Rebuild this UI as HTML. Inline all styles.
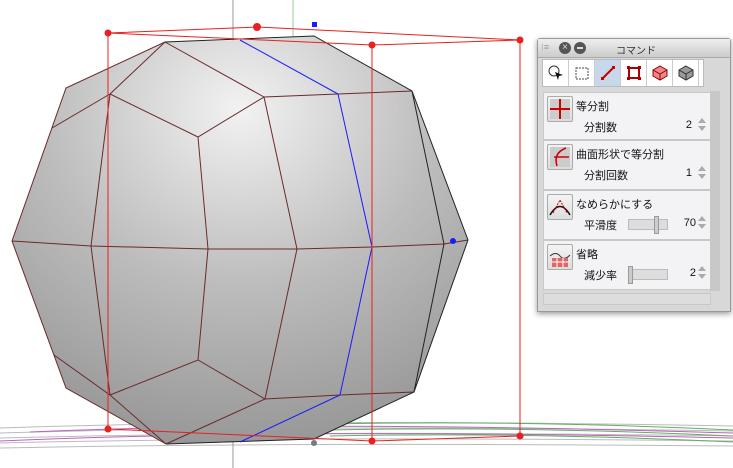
<!DOCTYPE html>
<html><head><meta charset="utf-8"><style>
body{margin:0;width:733px;height:468px;background:#fff;position:relative;overflow:hidden;font-family:"Liberation Sans","Noto Sans CJK JP",sans-serif;}
svg.m{position:absolute;left:0;top:0}
.p{position:absolute;left:537px;top:38px;width:192px;height:272px;background:#d8d8d8;border:1px solid #999;box-shadow:0 2px 6px rgba(0,0,0,.4);border-radius:3px 3px 0 0}
.tb{height:18px;background:linear-gradient(#eee,#ccc);border-bottom:1px solid #aaa;position:relative;font-size:10px;color:#333}
.tools{position:absolute;top:20px;left:4px;width:160px;height:26px;background:#fff;border:1px solid #bbb;display:flex}
.tools div{width:25px;height:26px;border-right:1px solid #ccc;display:flex;align-items:center;justify-content:center}
.sec{position:absolute;left:5px;width:166px;background:#f3f3f5;border:1px solid #c8c8cc;font-size:11px;color:#111}
.ic{position:absolute;left:3px;top:3px;width:24px;height:24px;border:1px solid #aaa;background:linear-gradient(#f4f4f4,#ddd);border-radius:2px}
.t1{position:absolute;left:32px;top:5px}
.t2{position:absolute;left:40px;top:26px}
.v{position:absolute;right:18px;top:26px}
.sp{position:absolute;right:4px;top:25px;width:0;height:0;border-left:4px solid transparent;border-right:4px solid transparent;border-bottom:5px solid #aaa}
.sp:after{content:"";position:absolute;left:-4px;top:8px;border-left:4px solid transparent;border-right:4px solid transparent;border-top:5px solid #aaa}
.sl{position:absolute;left:84px;top:28px;width:38px;height:9px;background:#ddd;border:1px solid #bbb}
</style></head><body>
<svg class="m" width="733" height="468">
<defs><radialGradient id="g" cx="0.5" cy="0.18" r="0.95"><stop offset="0" stop-color="#f2f2f2"/><stop offset="0.45" stop-color="#bdbdbd"/><stop offset="1" stop-color="#8c8c8c"/></radialGradient></defs>
<g stroke-width="1" fill="none">
<path d="M0 428 Q300 418 733 426 M0 433 Q300 424 733 431 M0 438 Q300 430 733 436 M0 443 Q300 436 733 441 M0 448 Q300 442 733 446" stroke="#bbb"/>
<path d="M30 432 Q300 420 733 433 M0 441 Q300 428 733 438" stroke="#c060c0"/>
<path d="M330 424 Q520 420 733 430 M330 430 Q520 426 733 436 M330 436 Q520 432 733 442" stroke="#60b060"/>
</g>
<line x1="233" y1="0" x2="233" y2="468" stroke="#999"/>
<line x1="293" y1="0" x2="293" y2="38" stroke="#9c9"/>
<polygon points="165,42 240,40 314,36 412,91 468,240 414,392 314,439 240,442 166,444 66,388 12,241 66,88" fill="url(#g)"/>
<g stroke="#6a2a2a" stroke-width="1" fill="none">
<path d="M165,42 L264,97 L198,137 L110,94 Z M110,94 L52,128 M264,97 L338,94 L412,91"/>
<path d="M12,241 L91,246 L208,249 L297,249 L372,247 L444,244 L468,240"/>
<path d="M110,94 L91,246 L110,395 M198,137 L208,249 L198,360 M264,97 L297,249 L265,399"/>
<path d="M54,355 L110,395 L198,360 L265,399 L340,395 L414,392 M110,395 L166,444 M265,399 L166,444"/>
<path d="M165,42 L66,88 L12,241 L66,388 L166,444"/>
</g>
<path d="M412,91 L444,244 L414,392 M165,42 L314,36 L412,91 L468,240 L414,392 L314,439 L166,444" stroke="#222" fill="none"/>
<path d="M240,40 L338,94 L372,247 L340,395 L240,442" stroke="#1a1aff" fill="none"/>
<g stroke="#e82020" fill="none"><path d="M108,33 L257,27 L520,40 L372,45 Z M108,33 V429 M372,45 V441 M520,40 V436 M108,429 L372,441 L520,436"/></g>
<g fill="#e82020"><circle cx="108" cy="33" r="3.5"/><circle cx="257" cy="27" r="4"/><circle cx="520" cy="40" r="3.5"/><circle cx="372" cy="45" r="3.5"/><circle cx="108" cy="429" r="3.5"/><circle cx="372" cy="441" r="3.5"/><circle cx="520" cy="436" r="3.5"/></g>
<rect x="312" y="22" width="5" height="5" fill="#1a1aff"/><circle cx="453" cy="241" r="3" fill="#1a1aff"/><circle cx="314" cy="443" r="3" fill="#778"/>
</svg>
<div class="p">
<div class="tb"><span style="position:absolute;left:3px;top:3px;color:#999;font-size:9px">⁝≡</span>
<span style="position:absolute;left:21px;top:3px;width:12px;height:12px;border-radius:50%;background:#555;color:#ddd;font-size:10px;line-height:12px;text-align:center">×</span>
<span style="position:absolute;left:36px;top:3px;width:12px;height:12px;border-radius:50%;background:#555"><span style="position:absolute;left:3px;top:5px;width:6px;height:2px;background:#ddd"></span></span>
<span style="position:absolute;left:78px;top:3px">コマンド</span></div>
<div class="tools">
<div><svg width="18" height="18"><circle cx="7" cy="7" r="5" stroke="#333" fill="none"/><path d="M8 8 L16 11 L12 12 L11 16 Z" fill="#111"/></svg></div>
<div><svg width="18" height="18"><rect x="3" y="4" width="12" height="11" stroke="#444" fill="none" stroke-dasharray="2 1"/></svg></div>
<div style="background:#c6d8ea"><svg width="18" height="18"><path d="M3 15 L15 3" stroke="#c00" stroke-width="2"/><rect x="2" y="13" width="3" height="3" fill="#c00"/><rect x="13" y="2" width="3" height="3" fill="#c00"/></svg></div>
<div><svg width="18" height="18"><rect x="4" y="4" width="10" height="10" stroke="#a00" stroke-width="2" fill="none"/><rect x="2" y="2" width="3" height="3" fill="#a00"/><rect x="13" y="13" width="3" height="3" fill="#a00"/><rect x="13" y="2" width="3" height="3" fill="#a00"/><rect x="2" y="13" width="3" height="3" fill="#a00"/></svg></div>
<div><svg width="18" height="18"><path d="M9 2 L16 6 V12 L9 16 L2 12 V6 Z" fill="#e88" stroke="#900"/><path d="M2 6 L9 10 L16 6 M9 10 V16" stroke="#900" fill="none"/></svg></div>
<div><svg width="18" height="18"><path d="M9 2 L16 6 V12 L9 16 L2 12 V6 Z" fill="#999" stroke="#333"/><path d="M2 6 L9 10 L16 6 M9 10 V16" stroke="#333" fill="none"/></svg></div>
</div>
<div style="position:absolute;left:172px;top:52px;width:10px;height:200px;background:#c8c8c8"></div>
<div class="sec" style="top:53px;height:46px"><div class="ic"><svg width="24" height="24"><rect x="2" y="2" width="20" height="20" fill="#ccc"/><path d="M12 2V22M2 12H22" stroke="#c00" stroke-width="2"/></svg></div><span class="t1">等分割</span><span class="t2">分割数</span><span class="v">2</span><span class="sp"></span></div>
<div class="sec" style="top:101px;height:48px"><div class="ic"><svg width="24" height="24"><rect x="2" y="2" width="20" height="20" fill="#ccc"/><path d="M18 3 Q5 8 9 21 M6 12 H21" stroke="#c00" stroke-width="1.5" fill="none"/></svg></div><span class="t1">曲面形状で等分割</span><span class="t2">分割回数</span><span class="v">1</span><span class="sp"></span></div>
<div class="sec" style="top:151px;height:48px"><div class="ic"><svg width="24" height="24"><path d="M2 20 Q12 3 22 20" stroke="#111" stroke-width="1.5" fill="none"/><path d="M5 18 L12 5 L19 18" stroke="#c00" fill="none" stroke-dasharray="2 1"/></svg></div><span class="t1">なめらかにする</span><span class="t2">平滑度</span><div class="sl"><div style="position:absolute;left:25px;top:-4px;width:3px;height:16px;background:#ccc;border:1px solid #999"></div></div><span class="v" style="right:14px">70</span><span class="sp"></span></div>
<div class="sec" style="top:201px;height:48px"><div class="ic"><svg width="24" height="24"><path d="M2 11 Q8 6 12 11 T22 10" stroke="#333" fill="none"/><rect x="4" y="13" width="16" height="9" fill="#d66"/><path d="M4 17H20M9 13V22M15 13V22" stroke="#fff"/></svg></div><span class="t1">省略</span><span class="t2">減少率</span><div class="sl"><div style="position:absolute;left:-1px;top:-4px;width:3px;height:16px;background:#ccc;border:1px solid #999"></div></div><span class="v" style="right:14px">2</span><span class="sp"></span></div>
<div style="position:absolute;left:5px;top:254px;width:166px;height:10px;background:#ddd;border:1px solid #c8c8cc"></div>
</div>
</body></html>
